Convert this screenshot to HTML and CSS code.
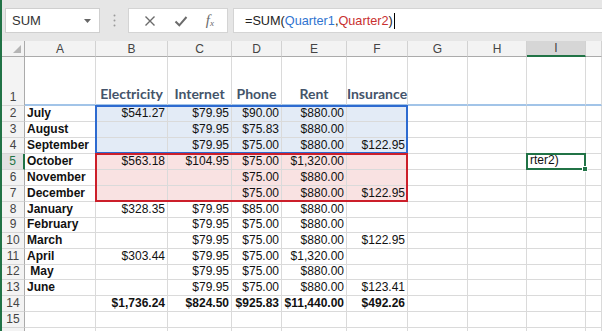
FILE: index.html
```html
<!DOCTYPE html>
<html lang="en">
<head>
  <meta charset="UTF-8">
  <meta name="viewport" content="width=device-width, initial-scale=1.0">
  <title>Expenses - SUM of quarters</title>
  <link rel="stylesheet" href="styles.css">
</head>
<body>
<div class="app">
  <div class="formula-bar">
    <div class="name-box">
      <span>SUM</span>
      <svg class="drop" width="7" height="4" viewBox="0 0 7 4"><path d="M0 0h7L3.5 4z" fill="#666"/></svg>
    </div>
    <div class="grip">
      <svg width="3" height="13" viewBox="0 0 3 13"><circle cx="1.5" cy="1.5" r="1" fill="#9a9a9a"/><circle cx="1.5" cy="6.5" r="1" fill="#9a9a9a"/><circle cx="1.5" cy="11.5" r="1" fill="#9a9a9a"/></svg>
    </div>
    <div class="fx-buttons">
      <svg width="12" height="12" viewBox="0 0 12 12"><path d="M1.5 1.5l9 9M10.5 1.5l-9 9" stroke="#6b6b6b" stroke-width="1.4" fill="none"/></svg>
      <svg width="14" height="12" viewBox="0 0 14 12"><path d="M1.5 6.5l3.8 3.8L12.5 2" stroke="#6b6b6b" stroke-width="2" fill="none"/></svg>
      <span class="fx">f<sub>x</sub></span>
    </div>
    <div class="formula-input">=SUM(<span class="ref-blue">Quarter1</span>,<span class="ref-red">Quarter2</span>)<span class="cursor"></span></div>
  </div>

  <div class="sheet">
    <div class="ch corner"><span class="tri"></span></div>
    <div class="ch">A</div><div class="ch">B</div><div class="ch">C</div><div class="ch">D</div><div class="ch">E</div>
    <div class="ch">F</div><div class="ch">G</div><div class="ch">H</div><div class="ch active">I</div><div class="ch"></div>

    <div class="rh">1</div>
    <div class="c hd"></div><div class="c hd">Electricity</div><div class="c hd">Internet</div><div class="c hd">Phone</div><div class="c hd">Rent</div>
    <div class="c hd">Insurance</div><div class="c hd"></div><div class="c hd"></div><div class="c hd"></div><div class="c hd"></div>

    <div class="rh">2</div>
    <div class="c m">July</div><div class="c n qb">$541.27</div><div class="c n qb">$79.95</div><div class="c n qb">$90.00</div><div class="c n qb">$880.00</div>
    <div class="c qb"></div><div class="c"></div><div class="c"></div><div class="c"></div><div class="c"></div>

    <div class="rh">3</div>
    <div class="c m">August</div><div class="c qb"></div><div class="c n qb">$79.95</div><div class="c n qb">$75.83</div><div class="c n qb">$880.00</div>
    <div class="c qb"></div><div class="c"></div><div class="c"></div><div class="c"></div><div class="c"></div>

    <div class="rh">4</div>
    <div class="c m">September</div><div class="c qb"></div><div class="c n qb">$79.95</div><div class="c n qb">$75.00</div><div class="c n qb">$880.00</div>
    <div class="c n qb">$122.95</div><div class="c"></div><div class="c"></div><div class="c"></div><div class="c"></div>

    <div class="rh active">5</div>
    <div class="c m">October</div><div class="c n qr">$563.18</div><div class="c n qr">$104.95</div><div class="c n qr">$75.00</div><div class="c n qr">$1,320.00</div>
    <div class="c qr"></div><div class="c"></div><div class="c"></div><div class="c selected">rter2)<span class="handle"></span></div><div class="c"></div>

    <div class="rh">6</div>
    <div class="c m">November</div><div class="c qr"></div><div class="c qr"></div><div class="c n qr">$75.00</div><div class="c n qr">$880.00</div>
    <div class="c qr"></div><div class="c"></div><div class="c"></div><div class="c"></div><div class="c"></div>

    <div class="rh">7</div>
    <div class="c m">December</div><div class="c qr"></div><div class="c qr"></div><div class="c n qr">$75.00</div><div class="c n qr">$880.00</div>
    <div class="c n qr">$122.95</div><div class="c"></div><div class="c"></div><div class="c"></div><div class="c"></div>

    <div class="rh">8</div>
    <div class="c m">January</div><div class="c n">$328.35</div><div class="c n">$79.95</div><div class="c n">$85.00</div><div class="c n">$880.00</div>
    <div class="c"></div><div class="c"></div><div class="c"></div><div class="c"></div><div class="c"></div>

    <div class="rh">9</div>
    <div class="c m">February</div><div class="c"></div><div class="c n">$79.95</div><div class="c n">$75.00</div><div class="c n">$880.00</div>
    <div class="c"></div><div class="c"></div><div class="c"></div><div class="c"></div><div class="c"></div>

    <div class="rh">10</div>
    <div class="c m">March</div><div class="c"></div><div class="c n">$79.95</div><div class="c n">$75.00</div><div class="c n">$880.00</div>
    <div class="c n">$122.95</div><div class="c"></div><div class="c"></div><div class="c"></div><div class="c"></div>

    <div class="rh">11</div>
    <div class="c m">April</div><div class="c n">$303.44</div><div class="c n">$79.95</div><div class="c n">$75.00</div><div class="c n">$1,320.00</div>
    <div class="c"></div><div class="c"></div><div class="c"></div><div class="c"></div><div class="c"></div>

    <div class="rh">12</div>
    <div class="c m">&nbsp;May</div><div class="c"></div><div class="c n">$79.95</div><div class="c n">$75.00</div><div class="c n">$880.00</div>
    <div class="c"></div><div class="c"></div><div class="c"></div><div class="c"></div><div class="c"></div>

    <div class="rh">13</div>
    <div class="c m">June</div><div class="c"></div><div class="c n">$79.95</div><div class="c n">$75.00</div><div class="c n">$880.00</div>
    <div class="c n">$123.41</div><div class="c"></div><div class="c"></div><div class="c"></div><div class="c"></div>

    <div class="rh">14</div>
    <div class="c"></div><div class="c n total">$1,736.24</div><div class="c n total">$824.50</div><div class="c n total">$925.83</div><div class="c n total">$11,440.00</div>
    <div class="c n total">$492.26</div><div class="c"></div><div class="c"></div><div class="c"></div><div class="c"></div>

    <div class="rh">15</div>
    <div class="c"></div><div class="c"></div><div class="c"></div><div class="c"></div><div class="c"></div>
    <div class="c"></div><div class="c"></div><div class="c"></div><div class="c"></div><div class="c"></div>

    <div class="rh"></div>
    <div class="c"></div><div class="c"></div><div class="c"></div><div class="c"></div><div class="c"></div>
    <div class="c"></div><div class="c"></div><div class="c"></div><div class="c"></div><div class="c"></div>

    <!-- range outlines for Quarter1 / Quarter2, drawn over the cells -->
    <div class="range q1"></div>
    <div class="range q2"></div>
  </div>
</div>
</body>
</html>
```

FILE: styles.css
```css
* {
    box-sizing: border-box;
}
body {
    margin: 0;
    font-family: "Liberation Sans", Arial, sans-serif;
    background-color: #e6e6e6;
    overflow: hidden;
}
.app {
    width: 602px;
    height: 331px;
    border-left: 2px solid #217346;
    overflow: hidden;
}

/* formula bar */
.formula-bar {
    display: flex;
    align-items: center;
    height: 41px;
    padding: 8px 0 8px 3px;
}
.name-box {
    width: 95px;
    height: 25px;
    background: #fff;
    border: 1px solid #cfcfcf;
    display: flex;
    align-items: center;
    justify-content: space-between;
    padding: 0 8px 0 6px;
    font-size: 13px;
    color: #333;
}
.grip {
    width: 28px;
    display: flex;
    justify-content: center;
}
.grip svg {
    display: block;
}
.fx-buttons {
    width: 100px;
    height: 25px;
    background: #fff;
    border: 1px solid #d4d4d4;
    display: flex;
    align-items: center;
    justify-content: space-around;
    padding: 0 4px 0 6px;
}
.fx {
    font-family: "Liberation Serif", serif;
    font-style: italic;
    font-size: 15px;
    color: #6b6b6b;
    line-height: 1;
}
.fx sub {
    font-size: 9px;
    vertical-align: -1px;
}
.formula-input {
    flex: 1;
    margin-left: 5px;
    height: 25px;
    background: #fff;
    border: 1px solid #d4d4d4;
    border-right: none;
    display: flex;
    align-items: center;
    padding-left: 11px;
    font-size: 12.7px;
    color: #222;
}
.ref-blue {
    color: #2f74d0;
}
.ref-red {
    color: #c9302f;
}
.cursor {
    display: inline-block;
    width: 1px;
    height: 16px;
    background: #000;
    margin-left: 1px;
}

/* sheet grid */
.sheet {
    display: grid;
    grid-template-columns: 23px 71px 72px 64px 50px 65px 61px 60px 59px 59px 1fr;
    grid-template-rows: 16px 49px repeat(6, 16px) repeat(9, 15.7px);
    background: #fff;
    position: relative;
}
.ch {
    background: #f3f3f3;
    border-right: 1px solid #d2d2d2;
    border-bottom: 1px solid #ababab;
    display: flex;
    align-items: center;
    justify-content: center;
    font-size: 12px;
    color: #444;
}
.ch.active {
    background: #d6d6d6;
    border-bottom: 2px solid #217346;
}
.corner {
    position: relative;
    border-right-color: #ababab;
}
.tri {
    position: absolute;
    right: 3px;
    bottom: 3px;
    width: 0;
    height: 0;
    border-left: 8px solid transparent;
    border-bottom: 8px solid #b5b5b5;
}
.rh {
    background: #f3f3f3;
    border-right: 1px solid #ababab;
    border-bottom: 1px solid #d6d6d6;
    display: flex;
    align-items: flex-end;
    justify-content: center;
    font-size: 12px;
    line-height: 14px;
    color: #444;
    padding-bottom: 1px;
}
.rh.active {
    background: #e1e1e1;
    border-right: 2px solid #217346;
    color: #217346;
}
.c {
    border-right: 1px solid #dadada;
    border-bottom: 1px solid #dadada;
    display: flex;
    align-items: flex-end;
    padding: 0 2px 1px 2px;
    font-size: 12px;
    line-height: 14px;
    color: #111;
    white-space: nowrap;
    min-width: 0;
}
.c.n {
    justify-content: flex-end;
}
.c.m {
    font-weight: bold;
}
.c.total {
    font-weight: bold;
}
.c.hd {
    border-bottom: 2px solid #a2c4e8;
    justify-content: center;
    font-family: Lato, "Liberation Sans", sans-serif;
    font-weight: bold;
    font-size: 14px;
    line-height: 18px;
    color: #44546a;
    padding-bottom: 1px;
}
.qb {
    background: #e3ebf6;
}
.qr {
    background: #f9e2e2;
}
.selected {
    position: relative;
    border: 2px solid #217346;
    margin: -1px 0 0 -1px;
    padding-left: 2px;
}
.handle {
    position: absolute;
    right: -4px;
    bottom: -4px;
    width: 6px;
    height: 6px;
    background: #217346;
    border: 1px solid #fff;
}

/* named range outlines sit in their grid area, out of the flow */
.range {
    position: absolute;
    top: -1px;
    left: -1px;
    right: 0;
    bottom: 0;
    border: 2px solid;
    pointer-events: none;
    z-index: 2;
}
.q1 {
    grid-column: 3 / 8;
    grid-row: 3 / 6;
    border-color: #2e6bd0;
}
.q2 {
    grid-column: 3 / 8;
    grid-row: 6 / 9;
    border-color: #cc1f2a;
}
```
